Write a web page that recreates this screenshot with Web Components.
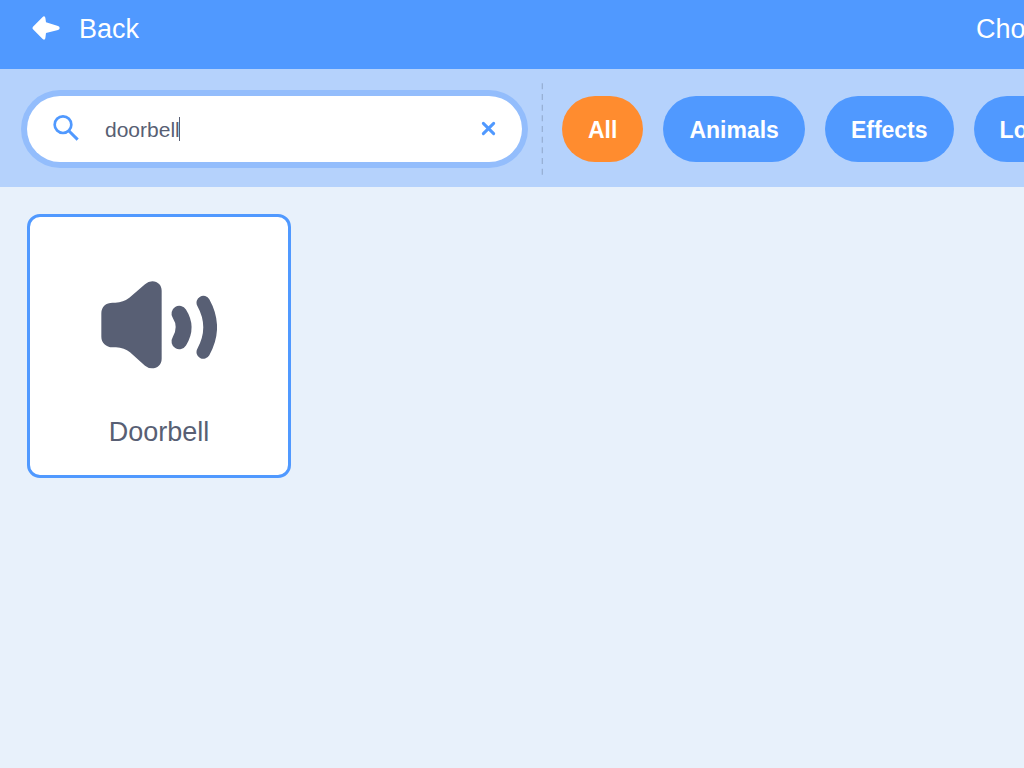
<!DOCTYPE html>
<html lang="en">
<head>
<meta charset="utf-8">
<meta name="viewport" content="width=device-width, initial-scale=1">
<title>Choose a Sound</title>
<style>
html, body { margin: 0; min-height: 100%; background: #e8f1fb; }
body { font-family: "Liberation Sans", Arial, sans-serif; color: #585f74; }
</style>
</head>
<body>
<sound-library>
  <library-header slot="header" label="Back">Choose a Sound</library-header>
  <library-filter slot="filter">
    <search-field slot="search" value="doorbell"></search-field>
    <tag-button active>All</tag-button>
    <tag-button>Animals</tag-button>
    <tag-button>Effects</tag-button>
    <tag-button>Loops</tag-button>
  </library-filter>
  <sound-card>Doorbell</sound-card>
</sound-library>
<script>
function define(name, markup, setup) {
  customElements.define(name, class extends HTMLElement {
    constructor() {
      super();
      this.attachShadow({ mode: "open" }).innerHTML = markup;
    }
    connectedCallback() {
      if (setup) setup(this, this.shadowRoot);
    }
  });
}

define("sound-library", `
<style>
:host { display: block; overflow: hidden;
  --blue: #5099ff; --pale: #b5d2fc; --orange: #ff8c2f; --ink: #585f74; }
main { display: flex; flex-wrap: wrap; gap: 20px; padding: 27px; }
</style>
<slot name="header"></slot>
<slot name="filter"></slot>
<main><slot></slot></main>`);

define("library-header", `
<style>
:host { display: block; }
header { display: flex; justify-content: space-between; overflow: hidden;
  padding: 13px 0 24px 32px; background: var(--blue); color: #fff; font-size: 27px; line-height: 32px; }
button { display: flex; align-items: center; gap: 19px; padding: 0; border: 0;
  background: none; color: inherit; font: inherit; cursor: pointer; }
svg { margin-bottom: 2px; }
h1 { flex: 0 0 48px; min-width: 0; margin: 0; font: inherit; white-space: nowrap; }
</style>
<header>
  <button type="button">
    <svg width="28" height="24" viewBox="97 47 84 72" aria-hidden="true">
      <path fill="#fff" d="M100 79L129 50Q134 45 137 52L139 66L175 77Q180 79 180 83Q180 88 175 89L139 98L137 114Q135 121 129 116L100 87Q97 83 100 79Z"/>
    </svg>
    <span></span>
  </button>
  <h1><slot></slot></h1>
</header>`, (host, root) => {
  root.querySelector("span").textContent = host.getAttribute("label");
});

define("library-filter", `
<style>
:host { display: block; }
section { display: flex; align-items: center; padding: 14px 0 12px 27px; background: var(--pale); }
svg { flex: none; margin: 0 19px; }
nav { display: flex; flex: 1; gap: 20px; min-width: 0; overflow: hidden; }
</style>
<section>
  <slot name="search"></slot>
  <svg width="2" height="92" viewBox="0 0 6 276" aria-hidden="true">
    <path d="M4 1V276" fill="none" stroke="#98b1d6" stroke-width="4" stroke-dasharray="18 14"/>
  </svg>
  <nav aria-label="Categories"><slot></slot></nav>
</section>`);

define("search-field", `
<style>
:host { display: block; flex: 0 1 495px; }
.box { display: flex; align-items: center; height: 66px; box-sizing: border-box;
  padding: 0 26px; border-radius: 33px; background: #fff; box-shadow: 0 0 0 6px #93bdfc; }
.box > svg, button { flex: none; margin-bottom: 2px; }
input { flex: 1; min-width: 0; height: 26px; margin: 0 0 0 26px; padding: 1px 0 0; border: 0; outline: 0;
  background: linear-gradient(var(--ink), var(--ink)) 74px 1px / 1px 24px no-repeat;
  color: var(--ink); caret-color: transparent; font: 21px/26px "Liberation Sans", Arial, sans-serif; }
button { display: flex; padding: 0; border: 0; background: none; cursor: pointer; }
</style>
<div class="box" role="search">
  <svg width="26" height="28" viewBox="158 132 78 84" fill="none" stroke="#5099ff" aria-hidden="true">
    <circle cx="188" cy="164" r="25" stroke-width="8"/>
    <path d="M206 183L232 209" stroke-width="9"/>
  </svg>
  <input type="text" aria-label="Search">
  <button type="button" aria-label="Clear search">
    <svg width="15" height="15" viewBox="0 0 45 45" fill="none" stroke="#5099ff" stroke-width="9" stroke-linecap="round" aria-hidden="true">
      <path d="M7 7L38 38M38 7L7 38"/>
    </svg>
  </button>
</div>`, (host, root) => {
  const input = root.querySelector("input");
  input.value = host.getAttribute("value");
  const useNativeCaret = () => {
    input.style.background = "none";
    input.style.caretColor = "auto";
  };
  input.addEventListener("input", useNativeCaret);
  root.querySelector("button").addEventListener("click", () => {
    input.value = "";
    useNativeCaret();
    input.focus();
  });
});

define("tag-button", `
<style>
:host { display: block; flex: none; }
button { height: 66px; padding: 2px 26px 0; border: 0; border-radius: 33px; background: var(--blue);
  color: #fff; font: bold 23px/28px "Liberation Sans", Arial, sans-serif; cursor: pointer; }
:host([active]) button { background: var(--orange); }
</style>
<button type="button"><slot></slot></button>`, (host, root) => {
  root.querySelector("button").setAttribute("aria-pressed", host.hasAttribute("active"));
});

define("sound-card", `
<style>
:host { display: block; }
button { display: flex; flex-direction: column; align-items: center; justify-content: space-between;
  width: 264px; height: 264px; padding: 64px 20px 27px; border: 3px solid var(--blue); border-radius: 13px;
  background: #fff; color: var(--ink); font: 27px/32px "Liberation Sans", Arial, sans-serif; cursor: pointer; }
</style>
<button type="button">
  <svg width="116" height="88" viewBox="33 33 348 264" aria-hidden="true">
    <path fill="#585f74" d="M34 130C34 110 48 98 68 98H76Q100 97 118 83L165 43Q175 34 187 34C204 35 215 46 215 62V266C215 284 202 295 186 295Q175 295 165 287L120 247Q103 233 78 232H68C48 232 34 218 34 200Z"/>
    <g fill="none" stroke="#585f74" stroke-linecap="round">
      <path stroke-width="47" d="M268 131Q294 172 268 214"/>
      <path stroke-width="41" d="M340 98Q381 172 340 246"/>
    </g>
  </svg>
  <span><slot></slot></span>
</button>`);
</script>
</body>
</html>
